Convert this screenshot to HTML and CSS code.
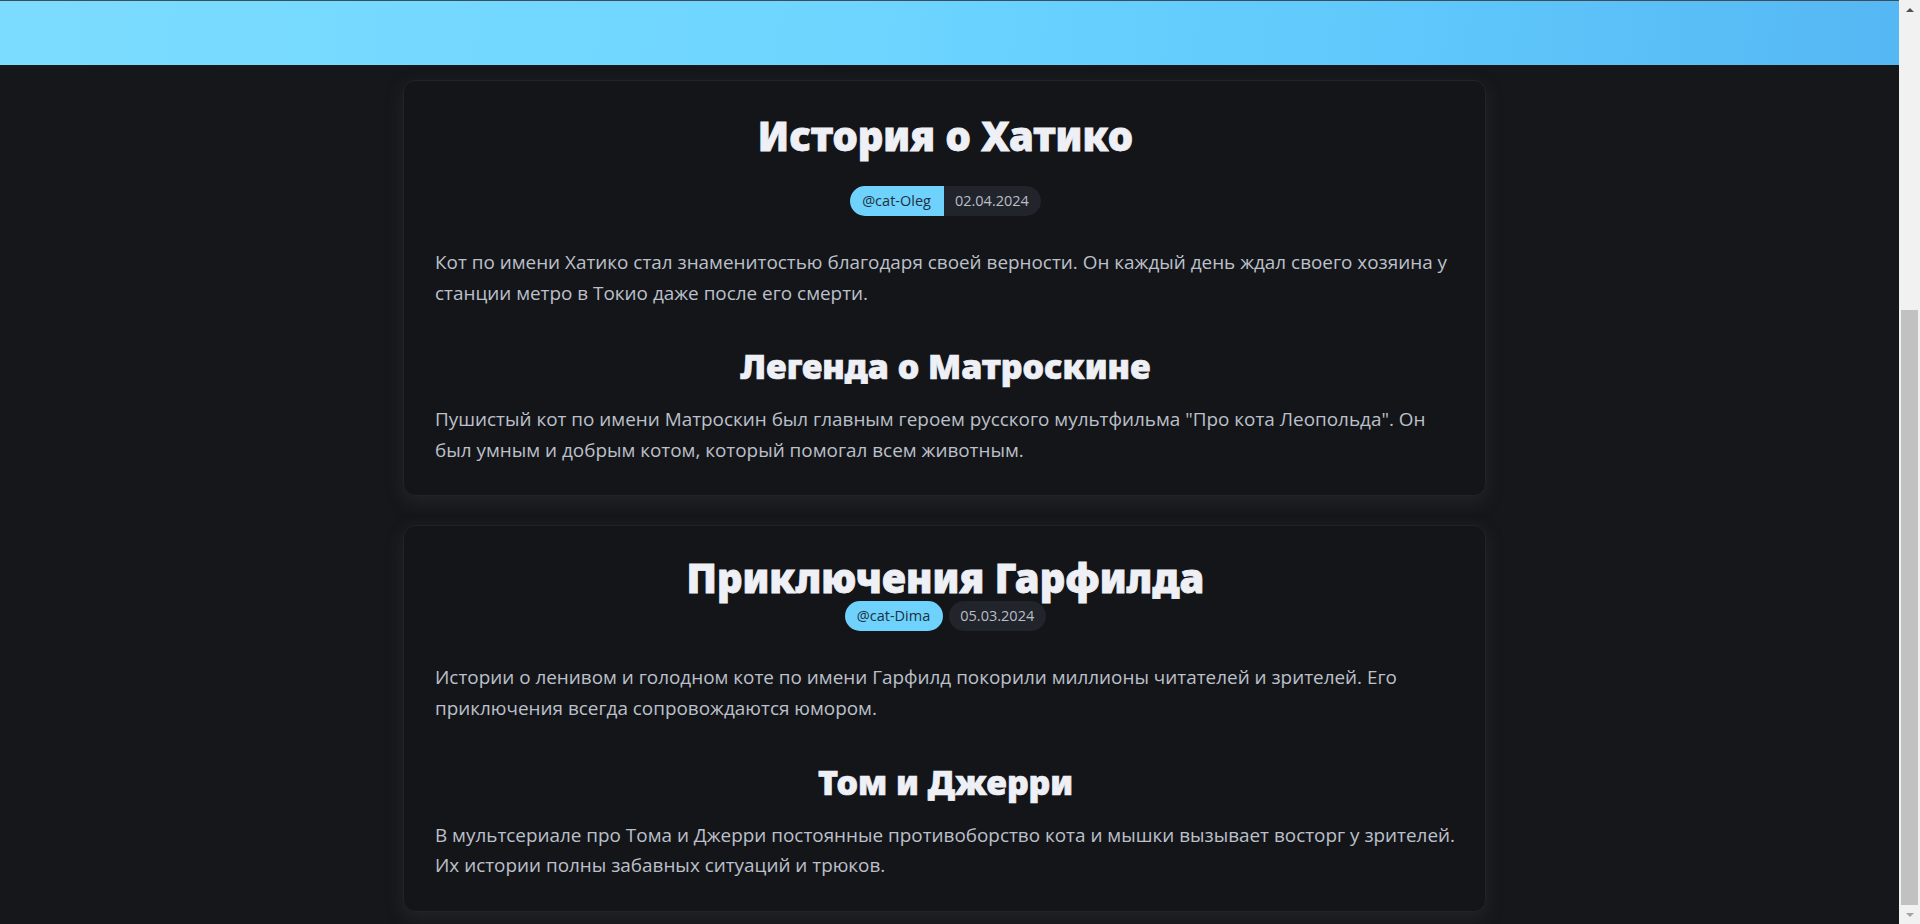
FILE: index.html
```html
<!DOCTYPE html>
<html lang="ru">
<head>
<meta charset="utf-8">
<title>Истории о котах</title>
<link rel="stylesheet" href="styles.css">
</head>
<body>
<div class="window">
  <div class="viewport">
    <header class="topbar"></header>
    <main class="feed">
      <article class="card">
        <h1 class="card-title">История о Хатико</h1>
        <div class="meta meta-joined">
          <span class="tag-author">@cat-Oleg</span><span class="tag-date">02.04.2024</span>
        </div>
        <p class="text">Кот по имени Хатико стал знаменитостью благодаря своей верности. Он каждый день ждал своего хозяина у станции метро в Токио даже после его смерти.</p>
        <h2 class="sub-title">Легенда о Матроскине</h2>
        <p class="text text-tight">Пушистый кот по имени Матроскин был главным героем русского мультфильма "Про кота Леопольда". Он был умным и добрым котом, который помогал всем животным.</p>
      </article>
      <article class="card card-compact">
        <h1 class="card-title card-title-flush">Приключения Гарфилда</h1>
        <div class="meta meta-split">
          <span class="tag-author pill">@cat-Dima</span><span class="tag-date pill">05.03.2024</span>
        </div>
        <p class="text">Истории о ленивом и голодном коте по имени Гарфилд покорили миллионы читателей и зрителей. Его приключения всегда сопровождаются юмором.</p>
        <h2 class="sub-title">Том и Джерри</h2>
        <p class="text text-tight">В мультсериале про Тома и Джерри постоянные противоборство кота и мышки вызывает восторг у зрителей. Их истории полны забавных ситуаций и трюков.</p>
      </article>
    </main>
  </div>
  <div class="scrollbar">
    <div class="sb-btn sb-up"><span class="arrow-up"></span></div>
    <div class="sb-track"><div class="sb-thumb"></div></div>
    <div class="sb-btn sb-down"><span class="arrow-down"></span></div>
  </div>
</div>
</body>
</html>
```

FILE: styles.css
```css
* { box-sizing: border-box; }
html, body { margin: 0; padding: 0; height: 100%; }
body {
  background: #16171b;
  font-family: "Open Sans", "Noto Sans", sans-serif;
  overflow: hidden;
}
.window {
  display: flex;
  height: 924px;
}
.viewport {
  flex: 1;
  display: flex;
  flex-direction: column;
  overflow: hidden;
  background: #16171b;
}
.topbar {
  height: 65px;
  flex: none;
  border-top: 1px solid #3e4d58;
  background: linear-gradient(95deg, #7cdcff 0%, #6dd5ff 45%, #5fc7fb 75%, #55b7f3 100%);
}
.feed {
  display: flex;
  flex-direction: column;
  align-items: center;
  gap: 29px;
  padding: 15px 10px 0 0;
}
.card {
  width: 1083px;
  background: #141519;
  border: 1px solid #202328;
  border-radius: 12px;
  padding: 31px 29px 30px 31px;
  box-shadow: 0 6px 18px rgba(70, 72, 80, 0.28);
}
.card-compact { padding-top: 28px; }
.card-title {
  margin: 0 0 26px;
  text-align: center;
  color: #eef0f6;
  font-family: "Noto Sans", "Open Sans", sans-serif;
  font-size: 40px;
  font-weight: 900;
  line-height: 48px;
  -webkit-text-stroke: 0.8px #eef0f6;
}
.card-title-flush { margin-bottom: -1px; }
.meta {
  display: flex;
  justify-content: center;
  font-size: 14.5px;
  line-height: 30px;
}
.meta-split { gap: 6px; }
.tag-author {
  background: #6ed2fd;
  color: #1c3040;
  padding: 0 13px 0 12px;
  border-radius: 15px 0 0 15px;
}
.tag-date {
  background: #21242b;
  color: #b9bdc7;
  padding: 0 12px 0 11px;
  border-radius: 0 15px 15px 0;
}
.pill { border-radius: 15px; }
.text {
  margin: 31px 0 0;
  color: #bcc0ca;
  font-size: 18.9px;
  line-height: 30.6px;
}
.text-tight { margin-top: 17px; }
.sub-title {
  margin: 37px 0 0;
  text-align: center;
  color: #eef0f6;
  font-family: "Noto Sans", "Open Sans", sans-serif;
  font-size: 34px;
  font-weight: 900;
  line-height: 42px;
  -webkit-text-stroke: 0.7px #eef0f6;
}
.scrollbar {
  width: 21px;
  flex: none;
  display: flex;
  flex-direction: column;
  background: #f1f1f1;
}
.sb-btn {
  display: flex;
  align-items: center;
  justify-content: center;
}
.sb-up { height: 19px; }
.sb-down { height: 19px; }
.arrow-up {
  width: 0; height: 0;
  border-left: 4px solid transparent;
  border-right: 4px solid transparent;
  border-bottom: 4px solid #505050;
}
.arrow-down {
  width: 0; height: 0;
  border-left: 4px solid transparent;
  border-right: 4px solid transparent;
  border-top: 4px solid #a3a3a3;
}
.sb-track {
  flex: 1;
  padding: 291px 2px 0;
}
.sb-thumb {
  height: 595px;
  background: #c1c1c1;
}
```
